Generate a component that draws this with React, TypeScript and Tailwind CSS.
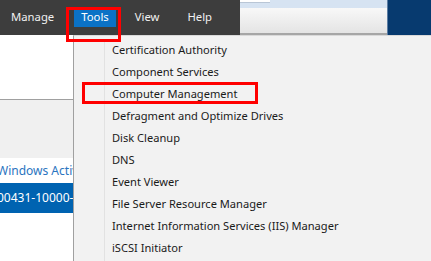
const items = [
  "Certification Authority",
  "Component Services",
  "Computer Management",
  "Defragment and Optimize Drives",
  "Disk Cleanup",
  "DNS",
  "Event Viewer",
  "File Server Resource Manager",
  "Internet Information Services (IIS) Manager",
  "iSCSI Initiator",
];

export default function App() {
  return (
    <div className="relative w-[431px] h-[261px] overflow-hidden bg-white font-['Noto_Sans',sans-serif] text-[11.1px]">
      {/* top strip */}
      <div className="flex h-[35px]">
        <div className="w-[240px] bg-[#3d3d3d] flex items-center text-[#f0f0f0] text-[11.3px]">
          <span className="ml-[11px]">Manage</span>
          <span className="ml-[20px] h-[19px] px-[7px] flex items-center bg-[#0b72c6] text-white">Tools</span>
          <span className="ml-[19px]">View</span>
          <span className="ml-[28px]">Help</span>
        </div>
        <div className="w-[147px] flex flex-col">
          <div className="h-[8px] bg-[#d6e3f2]">
            <div className="w-[30px] h-[3px] bg-white border-b border-[#b9c6d6]"></div>
          </div>
          <div className="flex-1 bg-gradient-to-b from-[#f8f8f8] to-[#e4e4e4]"></div>
          <div className="h-[2px] bg-[#a6a6a6]"></div>
        </div>
        <div className="flex-1 bg-[#073a6f] border-l border-[#5d7ea3]"></div>
      </div>

      {/* body */}
      <div className="flex h-[226px]">
        {/* left pane behind the menu */}
        <div className="w-[73px] flex flex-col overflow-hidden whitespace-nowrap text-[12px]">
          <div className="h-[65px] bg-white border-b border-[#a0a0a0]"></div>
          <div className="h-[58px] bg-[#f0f0f0]"></div>
          <div className="h-[25px] flex items-center text-[#2a74c0] overflow-hidden">
            <span className="ml-[-3px]">Windows Activ</span>
          </div>
          <div className="h-[30px] flex items-center bg-[#0063b1] text-white overflow-hidden">
            <span className="ml-[-3px]">00431-10000-0</span>
          </div>
          <div className="flex-1 bg-white"></div>
        </div>

        {/* Tools dropdown */}
        <div className="flex-1 bg-[#f2f2f2] border-l border-[#a0a0a0] border-t border-t-[#d9d9d9] pt-[3px] flex">
          <div className="w-[31px] border-r border-[#e2e2e2]"></div>
          <div className="flex-1 flex flex-col text-[#1a1a1a]">
            {items.map((t) => (
              <div key={t} className="h-[22px] flex items-center pl-[7px] whitespace-nowrap">
                {t}
              </div>
            ))}
          </div>
        </div>
      </div>

      {/* annotation boxes */}
      <div className="absolute left-[66px] top-[7px] w-[55px] h-[35px] border-[3px] border-[#ff0000]"></div>
      <div className="absolute left-[82px] top-[82px] w-[176px] h-[22px] border-[3px] border-[#ff0000]"></div>
    </div>
  );
}
